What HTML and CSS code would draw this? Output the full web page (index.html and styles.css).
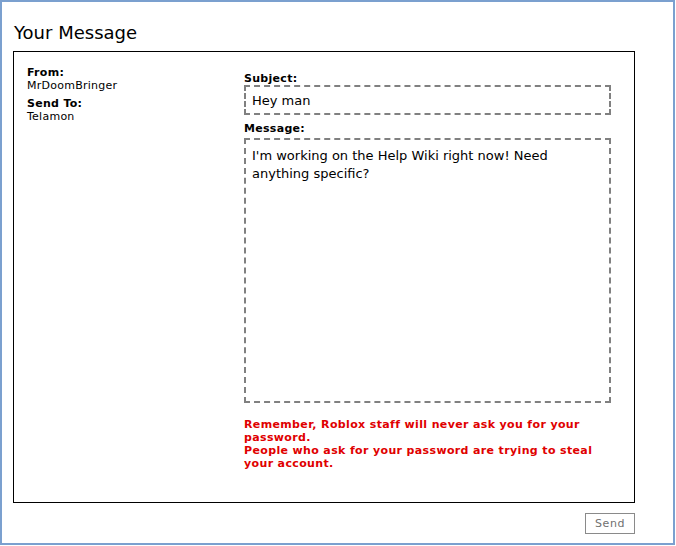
FILE: index.html
```html
<!DOCTYPE html>
<html>
<head>
<meta charset="utf-8">
<link rel="stylesheet" href="styles.css">
</head>
<body>
<div class="frame">
  <h1 class="title">Your Message</h1>
  <div class="box">
    <div class="meta">
      <div class="label">From:</div>
      <div class="value">MrDoomBringer</div>
      <div class="label gap">Send To:</div>
      <div class="value">Telamon</div>
    </div>
    <div class="compose">
      <div class="label">Subject:</div>
      <input class="subject" type="text" value="Hey man">
      <div class="label msg-label">Message:</div>
      <textarea class="message">I'm working on the Help Wiki right now! Need anything specific?</textarea>
      <p class="warning">Remember, Roblox staff will never ask you for your password.<br>People who ask for your password are trying to steal your account.</p>
    </div>
  </div>
  <div class="actions">
    <button class="send" type="button">Send</button>
  </div>
</div>
</body>
</html>
```

FILE: styles.css
```css
html, body {
  margin: 0;
  padding: 0;
  background: #fff;
}
body {
  font-family: "DejaVu Sans", Verdana, sans-serif;
  color: #000;
}
.frame {
  box-sizing: border-box;
  width: 675px;
  height: 545px;
  border: 2px solid #7ba0cf;
  padding: 0 38px 0 11px;
}
.title {
  margin: 0;
  padding: 20px 0 0 1px;
  height: 29px;
  font-size: 18px;
  font-weight: normal;
  line-height: 22px;
}
.box {
  border: 1px solid #000;
  height: 452px;
  box-sizing: border-box;
  display: grid;
  grid-template-columns: 217px 367px;
  padding: 14px 0 0 13px;
}
.label {
  font-size: 11px;
  font-weight: bold;
  line-height: 13px;
  letter-spacing: 0.3px;
}
.value {
  font-size: 11px;
  line-height: 13px;
  letter-spacing: 0.25px;
}
.meta .gap {
  margin-top: 5px;
}
.compose {
  display: flex;
  flex-direction: column;
  padding-top: 6px;
}
.subject, .message {
  box-sizing: border-box;
  width: 367px;
  border: 2px dashed #808080;
  font-family: "DejaVu Sans", Verdana, sans-serif;
  font-size: 13px;
  color: #000;
  padding: 0 6px;
  margin: 0;
  outline: none;
  background: #fff;
}
.subject {
  height: 30px;
  margin-top: 0;
}
.msg-label {
  margin-top: 7px;
}
.message {
  height: 265px;
  margin-top: 3px;
  line-height: 18px;
  padding-top: 7px;
  resize: none;
  overflow: hidden;
}
.warning {
  margin: 15px 0 0;
  color: #e00000;
  font-size: 11px;
  font-weight: bold;
  line-height: 13px;
  letter-spacing: 0.36px;
}
.actions {
  display: flex;
  justify-content: flex-end;
  padding-top: 10px;
}
.send {
  box-sizing: border-box;
  width: 50px;
  height: 21px;
  border: 1px solid #8a8a8a;
  background: #fff;
  color: #707070;
  font-family: "DejaVu Sans", Verdana, sans-serif;
  font-size: 11px;
  letter-spacing: 0.6px;
  padding: 0;
}
```
